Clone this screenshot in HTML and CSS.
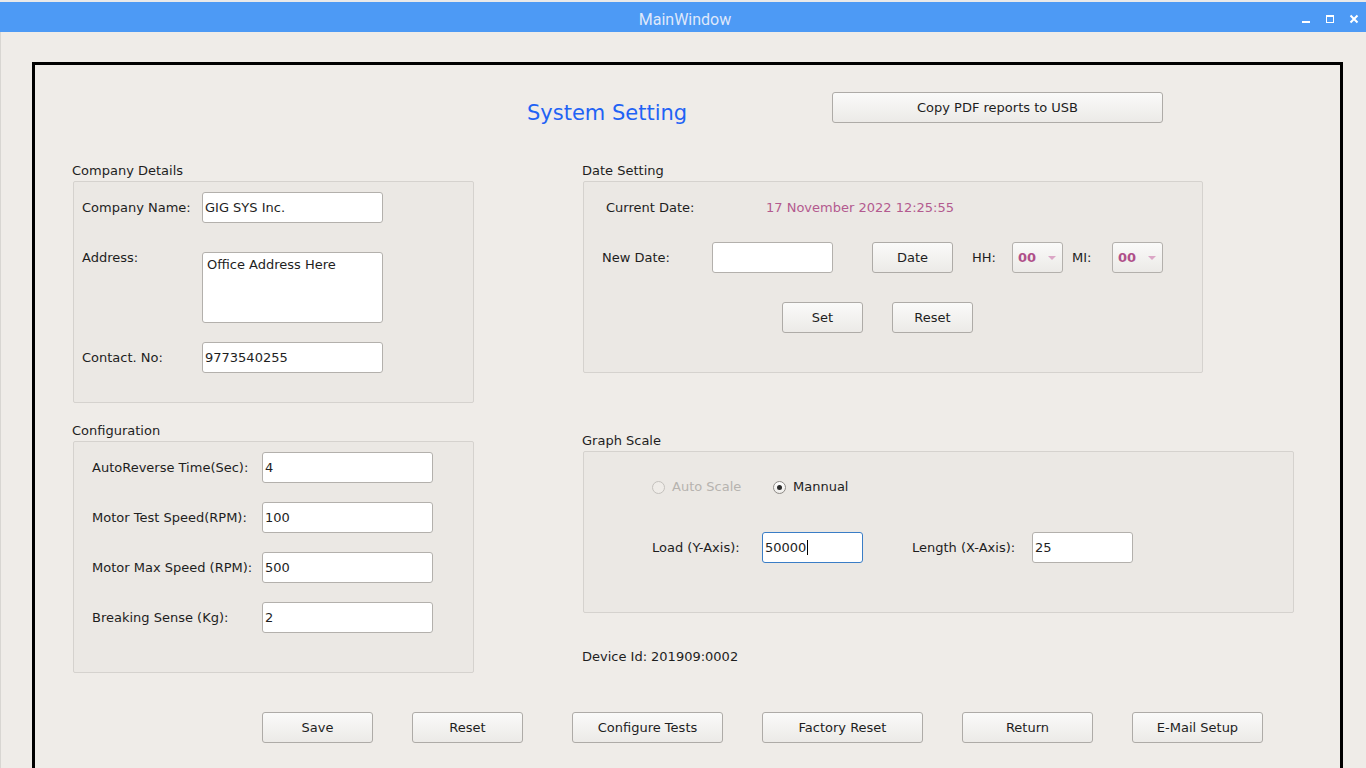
FILE: index.html
```html
<!DOCTYPE html>
<html>
<head>
<meta charset="utf-8">
<title>MainWindow</title>
<link rel="stylesheet" href="styles.css">
</head>
<body>
<div class="titlebar">
  <div class="tb-side"></div>
  <div class="tb-title">MainWindow</div>
  <div class="tb-side tb-controls">
    <svg class="tb-icon" width="10" height="10" viewBox="0 0 10 10"><rect x="1" y="7" width="8" height="2" fill="#ffffff"/></svg>
    <svg class="tb-icon" width="10" height="10" viewBox="0 0 10 10"><rect x="1.5" y="1.5" width="7" height="7" fill="none" stroke="#ffffff" stroke-width="1"/><rect x="1" y="1" width="8" height="2" fill="#ffffff"/></svg>
    <svg class="tb-icon" width="10" height="10" viewBox="0 0 10 10"><path d="M1.5 1.5 L8.5 8.5 M8.5 1.5 L1.5 8.5" stroke="#ffffff" stroke-width="2"/></svg>
  </div>
</div>
<div class="window">
  <div class="frame">
    <div class="header">
      <div class="page-title">System Setting</div>
      <div class="btn btn-copy">Copy PDF reports to USB</div>
    </div>
    <div class="main">
      <div class="col-left">
        <div class="group-title">Company Details</div>
        <div class="box box-company">
          <div class="row">
            <div class="lbl lbl-company">Company Name:</div>
            <div class="field f-company">GIG SYS Inc.</div>
          </div>
          <div class="row row-top row-address">
            <div class="lbl lbl-company lbl-address">Address:</div>
            <div class="field f-company textarea">Office Address Here</div>
          </div>
          <div class="row row-contact">
            <div class="lbl lbl-company">Contact. No:</div>
            <div class="field f-company">9773540255</div>
          </div>
        </div>
        <div class="group-title gt-config">Configuration</div>
        <div class="box box-config">
          <div class="row">
            <div class="lbl lbl-config">AutoReverse Time(Sec):</div>
            <div class="field f-config">4</div>
          </div>
          <div class="row row-cfg">
            <div class="lbl lbl-config">Motor Test Speed(RPM):</div>
            <div class="field f-config">100</div>
          </div>
          <div class="row row-cfg">
            <div class="lbl lbl-config">Motor Max Speed (RPM):</div>
            <div class="field f-config">500</div>
          </div>
          <div class="row row-cfg">
            <div class="lbl lbl-config">Breaking Sense (Kg):</div>
            <div class="field f-config">2</div>
          </div>
        </div>
      </div>
      <div class="col-right">
        <div class="group-title">Date Setting</div>
        <div class="box box-date">
          <div class="row row-current">
            <div class="lbl lbl-current">Current Date:</div>
            <div class="date-value">17 November 2022 12:25:55</div>
          </div>
          <div class="row row-newdate">
            <div class="lbl lbl-newdate">New Date:</div>
            <div class="field f-newdate"></div>
            <div class="btn btn-date">Date</div>
            <div class="lbl lbl-time">HH:</div>
            <div class="combo"><span class="combo-text">00</span><span class="combo-arrow"></span></div>
            <div class="lbl lbl-time lbl-mi">MI:</div>
            <div class="combo"><span class="combo-text">00</span><span class="combo-arrow"></span></div>
          </div>
          <div class="row row-set">
            <div class="btn btn-small">Set</div>
            <div class="btn btn-small btn-reset2">Reset</div>
          </div>
        </div>
        <div class="group-title gt-graph">Graph Scale</div>
        <div class="box box-graph">
          <div class="row row-radio">
            <div class="radio-item radio-auto disabled"><span class="radio"></span><span>Auto Scale</span></div>
            <div class="radio-item"><span class="radio checked"></span><span>Mannual</span></div>
          </div>
          <div class="row row-axis">
            <div class="lbl lbl-load">Load (Y-Axis):</div>
            <div class="field f-axis focused">50000<span class="caret"></span></div>
            <div class="lbl lbl-length">Length (X-Axis):</div>
            <div class="field f-axis">25</div>
          </div>
        </div>
        <div class="device">Device Id:<span class="device-val">201909:0002</span></div>
      </div>
    </div>
    <div class="actions">
      <div class="btn b-save">Save</div>
      <div class="btn b-reset">Reset</div>
      <div class="btn b-config">Configure Tests</div>
      <div class="btn b-factory">Factory Reset</div>
      <div class="btn b-return">Return</div>
      <div class="btn b-email">E-Mail Setup</div>
    </div>
  </div>
</div>
</body>
</html>
```

FILE: styles.css
```css
* { box-sizing: border-box; }
html, body {
  margin: 0;
  padding: 0;
  height: 768px;
  overflow: hidden;
  background: #efece8;
  font-family: "DejaVu Sans", "Liberation Sans", sans-serif;
  font-size: 13px;
  color: #1e1e1e;
}

.titlebar {
  height: 32px;
  border-top: 2px solid #e9e9e9;
  background: #4d9af5;
  display: grid;
  grid-template-columns: 1fr auto 1fr;
  align-items: center;
}
.tb-title {
  font-family: Roboto, "DejaVu Sans", sans-serif;
  font-size: 16px;
  color: #dfe8fb;
  line-height: 30px;
  padding-left: 4px;
  padding-top: 3px;
}
.tb-controls {
  display: flex;
  justify-content: flex-end;
  gap: 14px;
  padding-right: 7px;
  padding-top: 1px;
}
.tb-icon { display: block; }

.window {
  height: 736px;
  padding-top: 30px;
  padding-left: 31px;
  border-left: 1px solid #d8d6d2;
}

.frame {
  width: 1311px;
  height: 740px;
  border: 3px solid #000;
}

.header {
  display: flex;
  margin-top: 27px;
  height: 31px;
}
.page-title {
  width: 797px;
  padding-left: 492px;
  padding-top: 9px;
  font-size: 21px;
  line-height: 25px;
  color: #1f63f5;
  white-space: nowrap;
}
.btn {
  height: 31px;
  display: flex;
  align-items: center;
  justify-content: center;
  border: 1px solid #aeaba7;
  border-radius: 3px;
  background: linear-gradient(#fafaf9, #eceae7);
  color: #1e1e1e;
  white-space: nowrap;
}
.btn-copy { width: 331px; }

.main {
  display: grid;
  grid-template-columns: 402px 1fr;
  column-gap: 108px;
  margin-top: 39px;
  padding-left: 37px;
}

.group-title {
  height: 19px;
  line-height: 17px;
  white-space: nowrap;
}
.gt-config { margin-top: 19px; }
.gt-graph { margin-top: 59px; }

.box {
  margin-left: 1px;
  border: 1px solid #d5d2ce;
  border-radius: 2px;
  background: #ebe8e4;
}
.box-company { width: 401px; height: 222px; padding: 10px 0 0 8px; }
.box-config { width: 401px; height: 232px; padding: 10px 0 0 18px; }
.box-date { width: 620px; height: 192px; }
.box-graph { width: 711px; height: 162px; }

.row {
  display: flex;
  align-items: center;
}
.row-top { align-items: flex-start; }
.lbl { line-height: 16px; white-space: nowrap; }

.field {
  height: 31px;
  background: #ffffff;
  border: 1px solid #b3b0ac;
  border-radius: 3px;
  padding-left: 2px;
  display: flex;
  align-items: center;
  white-space: nowrap;
}

.lbl-company { width: 120px; }
.f-company { width: 181px; }
.row-address { margin-top: 29px; }
.lbl-address { margin-top: -2px; }
.textarea {
  height: 71px;
  align-items: flex-start;
  padding-top: 4px;
  padding-left: 4px;
  line-height: 16px;
}
.row-contact { margin-top: 19px; }

.lbl-config { width: 170px; }
.f-config { width: 171px; }
.row-cfg { margin-top: 19px; }

.row-current { margin-top: 18px; padding-left: 22px; }
.lbl-current { width: 160px; }
.date-value { color: #b35a8f; line-height: 16px; }

.row-newdate { margin-top: 26px; padding-left: 18px; }
.lbl-newdate { width: 110px; }
.f-newdate { width: 121px; }
.btn-date { width: 81px; margin-left: 39px; }
.lbl-time { width: 40px; margin-left: 19px; }
.lbl-mi { margin-left: 9px; }
.combo {
  width: 51px;
  height: 31px;
  border: 1px solid #b3b0ac;
  border-radius: 3px;
  background: linear-gradient(#fafaf9, #eceae7);
  display: flex;
  align-items: center;
  padding-left: 5px;
}
.combo-text {
  font-weight: bold;
  color: #b0508a;
  width: 30px;
}
.combo-arrow {
  width: 0;
  height: 0;
  border-left: 4px solid transparent;
  border-right: 4px solid transparent;
  border-top: 4px solid #dba6c6;
}

.row-set { margin-top: 29px; padding-left: 198px; }
.btn-small { width: 81px; }
.btn-reset2 { margin-left: 29px; }

.row-radio { margin-top: 27px; padding-left: 68px; line-height: 16px; }
.radio-item { display: flex; align-items: center; gap: 7px; white-space: nowrap; }
.radio-auto { width: 121px; }
.disabled { color: #b6b3af; }
.radio {
  width: 13px;
  height: 13px;
  border-radius: 50%;
  border: 1px solid #c4c1bd;
  background: #efece8;
  display: flex;
  align-items: center;
  justify-content: center;
}
.radio.checked {
  border-color: #8e8b87;
  background: linear-gradient(#ffffff, #eeece9);
}
.radio.checked::after {
  content: "";
  width: 5px;
  height: 5px;
  border-radius: 50%;
  background: #2c2c2c;
}

.row-axis { margin-top: 37px; padding-left: 68px; }
.lbl-load { width: 110px; }
.lbl-length { width: 120px; margin-left: 49px; }
.f-axis { width: 101px; }
.focused { border-color: #3a7dc6; }
.caret {
  display: inline-block;
  width: 1px;
  height: 15px;
  background: #000;
  margin-left: 1px;
}

.device { margin-top: 36px; line-height: 16px; white-space: nowrap; }
.device-val { margin-left: 4px; }

.actions {
  display: flex;
  margin-top: 39px;
  padding-left: 227px;
}
.actions .btn { margin-left: 39px; }
.actions .btn:first-child { margin-left: 0; }
.b-save { width: 111px; }
.b-reset { width: 111px; }
.actions .b-config { width: 151px; margin-left: 49px; }
.b-factory { width: 161px; }
.b-return { width: 131px; }
.b-email { width: 131px; }
```
